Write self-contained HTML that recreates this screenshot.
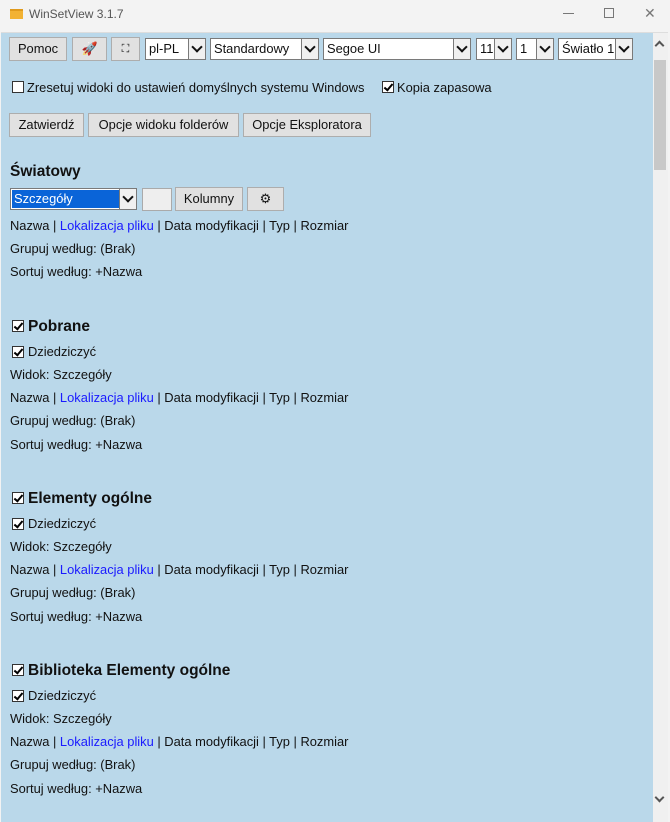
<!DOCTYPE html>
<html><head><meta charset="utf-8"><style>
*{margin:0;padding:0;box-sizing:border-box}
body{width:670px;height:822px;overflow:hidden;background:#f3f3f3;font-family:"Liberation Sans",sans-serif;font-size:12.9px;color:#111;position:relative}
.a{position:absolute;white-space:nowrap}
#content{position:absolute;left:1px;top:32px;width:667px;height:790px;background:#bad8ea;border-top:1px solid #ddd}
.btn{position:absolute;height:24px;background:#e1e1e1;border:1px solid #adadad;text-align:center;line-height:22px;font-size:12.9px}
.sel{position:absolute;height:22px;background:#fff;border:1px solid #7a7a7a;line-height:20px;padding-left:3px;font-size:12.9px}
.sel .ar{position:absolute;right:0;top:0;width:17px;height:20px;border-left:1px solid #7a7a7a;background:#f0f0f0}
.sel .ar:after{content:"";position:absolute;left:4px;top:4px;width:6px;height:6px;border-right:2px solid #111;border-bottom:2px solid #111;transform:rotate(45deg)}
.cb{position:absolute;width:12px;height:12px;border:1px solid #333;background:#fff}
.cb.c:after{content:"";position:absolute;left:3px;top:0px;width:3px;height:7px;border-right:2px solid #000;border-bottom:2px solid #000;transform:rotate(40deg)}
.h{font-weight:bold;font-size:15.5px}
.l{color:#1a1aff}
</style></head><body>
<div class="a" style="left:10px;top:9px;width:13px;height:10px;background:#f2b233;border-top:2px solid #e09a1c"></div>
<div class="a" style="left:29px;top:7px;font-size:12px;color:#555">WinSetView 3.1.7</div>
<div class="a" style="left:563px;top:13px;width:11px;height:1px;background:#777"></div>
<div class="a" style="left:604px;top:8px;width:10px;height:10px;border:1px solid #777"></div>
<div class="a" style="left:644px;top:5px;font-size:14px;color:#777">✕</div>
<div id="content"></div>
<div class="a" style="left:653px;top:33px;width:15px;height:789px;background:#f0f0f0"></div>
<div class="a" style="left:654px;top:60px;width:12px;height:110px;background:#c8c8c8"></div>
<div class="a" style="left:656px;top:42px;width:7px;height:7px;border-left:2px solid #555;border-top:2px solid #555;transform:rotate(45deg)"></div>
<div class="a" style="left:656px;top:794px;width:7px;height:7px;border-right:2px solid #555;border-bottom:2px solid #555;transform:rotate(45deg)"></div>

<div class="btn" style="left:9px;top:37px;width:58px">Pomoc</div>
<div class="btn" style="left:72px;top:37px;width:35px;color:#c33">🚀</div>
<div class="btn" style="left:111px;top:37px;width:29px;font-size:11px">⛶</div>
<div class="sel" style="left:145px;top:38px;width:61px">pl-PL<div class="ar"></div></div>
<div class="sel" style="left:210px;top:38px;width:109px">Standardowy<div class="ar"></div></div>
<div class="sel" style="left:323px;top:38px;width:148px">Segoe UI<div class="ar"></div></div>
<div class="sel" style="left:476px;top:38px;width:36px">11<div class="ar"></div></div>
<div class="sel" style="left:516px;top:38px;width:38px">1<div class="ar"></div></div>
<div class="sel" style="left:558px;top:38px;width:75px">Światło 1<div class="ar"></div></div>

<div class="cb" style="left:12px;top:81px"></div>
<div class="a" style="left:27px;top:80px">Zresetuj widoki do ustawień domyślnych systemu Windows</div>
<div class="cb c" style="left:382px;top:81px"></div>
<div class="a" style="left:397px;top:80px">Kopia zapasowa</div>

<div class="btn" style="left:9px;top:113px;width:75px">Zatwierdź</div>
<div class="btn" style="left:88px;top:113px;width:151px">Opcje widoku folderów</div>
<div class="btn" style="left:243px;top:113px;width:128px">Opcje Eksploratora</div>

<div class="a h" style="left:10px;top:163px">Światowy</div>
<div class="sel" style="left:10px;top:188px;width:127px;padding:1px"><div style="background:#0a64d8;color:#fff;width:108px;height:18px;line-height:18px;padding-left:2px">Szczegóły</div><div class="ar"></div></div>
<div class="a" style="left:142px;top:188px;width:30px;height:23px;background:#eee;border:1px solid #aaa"></div>
<div class="btn" style="left:175px;top:187px;width:68px">Kolumny</div>
<div class="btn" style="left:247px;top:187px;width:37px;font-size:13px">⚙</div>
<div class="a" style="left:10px;top:218px">Nazwa | <span class="l">Lokalizacja pliku</span> | Data modyfikacji | Typ | Rozmiar</div>
<div class="a" style="left:10px;top:241px">Grupuj według: (Brak)</div>
<div class="a" style="left:10px;top:264px">Sortuj według: +Nazwa</div>

<div class="cb c" style="left:12px;top:320px"></div><div class="a h" style="left:28px;top:318px">Pobrane</div>
<div class="cb c" style="left:12px;top:346px"></div><div class="a" style="left:28px;top:344px">Dziedziczyć</div>
<div class="a" style="left:10px;top:367px">Widok: Szczegóły</div>
<div class="a" style="left:10px;top:390px">Nazwa | <span class="l">Lokalizacja pliku</span> | Data modyfikacji | Typ | Rozmiar</div>
<div class="a" style="left:10px;top:413px">Grupuj według: (Brak)</div>
<div class="a" style="left:10px;top:437px">Sortuj według: +Nazwa</div>

<div class="cb c" style="left:12px;top:492px"></div><div class="a h" style="left:28px;top:490px">Elementy ogólne</div>
<div class="cb c" style="left:12px;top:518px"></div><div class="a" style="left:28px;top:516px">Dziedziczyć</div>
<div class="a" style="left:10px;top:539px">Widok: Szczegóły</div>
<div class="a" style="left:10px;top:562px">Nazwa | <span class="l">Lokalizacja pliku</span> | Data modyfikacji | Typ | Rozmiar</div>
<div class="a" style="left:10px;top:585px">Grupuj według: (Brak)</div>
<div class="a" style="left:10px;top:609px">Sortuj według: +Nazwa</div>

<div class="cb c" style="left:12px;top:664px"></div><div class="a h" style="left:28px;top:662px">Biblioteka Elementy ogólne</div>
<div class="cb c" style="left:12px;top:690px"></div><div class="a" style="left:28px;top:688px">Dziedziczyć</div>
<div class="a" style="left:10px;top:711px">Widok: Szczegóły</div>
<div class="a" style="left:10px;top:734px">Nazwa | <span class="l">Lokalizacja pliku</span> | Data modyfikacji | Typ | Rozmiar</div>
<div class="a" style="left:10px;top:757px">Grupuj według: (Brak)</div>
<div class="a" style="left:10px;top:781px">Sortuj według: +Nazwa</div>
</body></html>
